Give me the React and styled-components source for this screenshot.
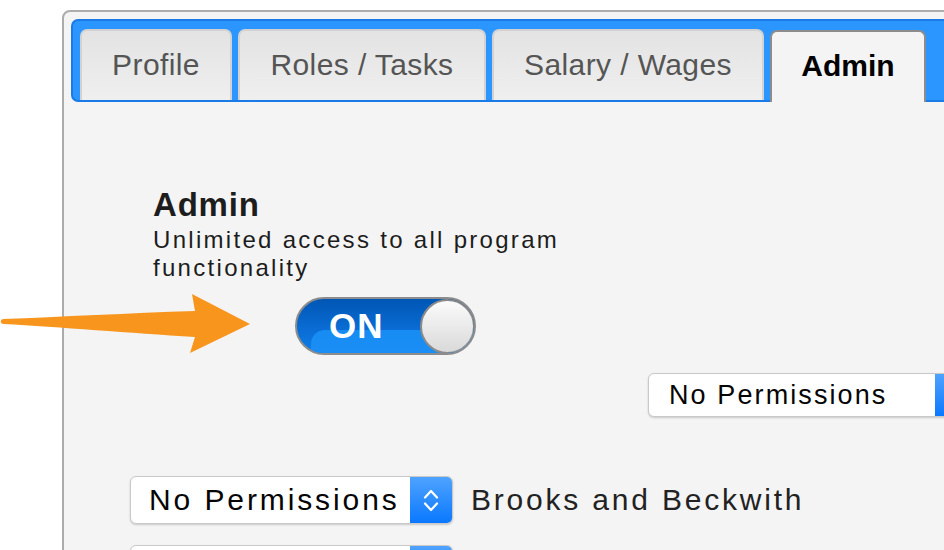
import React from 'react'
import styled, { createGlobalStyle } from 'styled-components'

const GlobalStyle = createGlobalStyle`
  html, body {
    margin: 0;
    padding: 0;
    background: #ffffff;
  }
  body {
    font-family: "Liberation Sans", Arial, Helvetica, sans-serif;
  }
`

const Page = styled.div`
  position: relative;
  width: 944px;
  height: 550px;
  overflow: hidden;
  padding: 10px 0 0 62px;
  box-sizing: border-box;
`

const Panel = styled.div`
  width: 920px;
  height: 600px;
  box-sizing: border-box;
  border: 2px solid #acacac;
  border-radius: 8px 0 0 0;
  background: #f4f4f4;
  padding: 7px 0 0 7px;
`

const TabBar = styled.div`
  display: flex;
  align-items: flex-end;
  gap: 6px;
  height: 83px;
  box-sizing: border-box;
  padding: 9px 0 0 7px;
  background: #2b96ff;
  border: 2px solid #1a7ae6;
  border-right: none;
  border-radius: 7px 0 0 7px;
`

const Tab = styled.div`
  flex: none;
  width: ${({ width }) => width}px;
  height: ${({ active }) => (active ? 72 : 71)}px;
  margin-bottom: ${({ active }) => (active ? -2 : 0)}px;
  box-sizing: border-box;
  display: flex;
  align-items: center;
  justify-content: center;
  padding-bottom: 2px;
  border: 2px solid ${({ active }) => (active ? '#8c8c8c' : '#d2d2d2')};
  border-bottom: none;
  border-radius: 7px 7px 0 0;
  background: ${({ active }) => (active ? '#f4f4f4' : 'linear-gradient(#e3e3e3, #efefef)')};
  color: ${({ active }) => (active ? '#000' : '#555')};
  font-size: 30px;
  font-weight: ${({ active }) => (active ? 700 : 400)};
  letter-spacing: ${({ active }) => (active ? 0 : 0.4)}px;
`

const Content = styled.div`
  padding: 84px 0 0 82px;
`

const Heading = styled.div`
  font-size: 33px;
  line-height: 38px;
  font-weight: 700;
  color: #1d1d1d;
  letter-spacing: 0.8px;
`

const Description = styled.div`
  width: 450px;
  margin-top: 2px;
  font-size: 24px;
  line-height: 28px;
  color: #1d1d1d;
  letter-spacing: 2.3px;
`

const Toggle = styled.div`
  position: relative;
  width: 181px;
  height: 58px;
  margin: 15px 0 0 142px;
  box-sizing: border-box;
  border: 2px solid #8c8c8c;
  border-radius: 29px;
  overflow: hidden;
  display: flex;
  align-items: center;
  justify-content: space-between;
  padding-left: 32px;
  background: linear-gradient(#0056b4, #0a6cd4 55%, #0f7de8);

  &::after {
    content: '';
    position: absolute;
    left: 14px;
    right: 0;
    top: 31px;
    bottom: 0;
    border-radius: 14px 0 0 0;
    background: linear-gradient(#168cf2, #1b8ef5);
  }
`

const ToggleLabel = styled.span`
  position: relative;
  z-index: 1;
  color: #ffffff;
  font-size: 35px;
  font-weight: 700;
  letter-spacing: 1px;
`

const Knob = styled.span`
  position: relative;
  z-index: 1;
  width: 55px;
  height: 55px;
  margin-right: -1px;
  box-sizing: border-box;
  border-radius: 50%;
  border: 2px solid #8a8a8a;
  background: linear-gradient(#fbfbfb, #d9d9d9);
`

const SelectRow = styled.div`
  display: flex;
  align-items: center;
  gap: 18px;
  margin: ${({ top }) => top}px 0 0 ${({ left }) => left}px;
`

const Select = styled.div`
  flex: none;
  display: flex;
  width: ${({ width }) => width}px;
  height: ${({ height }) => height}px;
  box-sizing: border-box;
  border: 1px solid #c9c9c9;
  border-radius: 6px;
  background: #ffffff;
  box-shadow: 0 1px 2px rgba(0, 0, 0, 0.18);
  overflow: hidden;
`

const SelectText = styled.span`
  flex: 1;
  display: flex;
  align-items: center;
  padding-left: ${({ pad }) => pad}px;
  color: #050505;
  font-size: ${({ size }) => size}px;
  letter-spacing: ${({ spacing }) => spacing}px;
  white-space: nowrap;
  overflow: hidden;
`

const SelectArrows = styled.span`
  flex: none;
  width: 42px;
  display: flex;
  flex-direction: column;
  align-items: center;
  justify-content: center;
  gap: 3px;
  background: linear-gradient(#4fa3ff, #0a78ff);
`

const RowLabel = styled.span`
  color: #222;
  font-size: 30px;
  letter-spacing: 2.8px;
  white-space: nowrap;
`

const Chevron = ({ up }) => (
  <svg width="16" height="10" viewBox="0 0 16 10">
    <path
      d={up ? 'M2 8.5 L8 2 L14 8.5' : 'M2 1.5 L8 8 L14 1.5'}
      fill="none"
      stroke="#ffffff"
      strokeWidth="2.2"
      strokeLinecap="round"
      strokeLinejoin="round"
    />
  </svg>
)

const Arrow = styled.svg`
  position: absolute;
  left: 0;
  top: 290px;
`

function PermissionSelect({ width, height, size, pad, spacing }) {
  return (
    <Select width={width} height={height}>
      <SelectText size={size} pad={pad} spacing={spacing}>No Permissions</SelectText>
      <SelectArrows>
        <Chevron up />
        <Chevron />
      </SelectArrows>
    </Select>
  )
}

const tabs = [
  { label: 'Profile', width: 152 },
  { label: 'Roles / Tasks', width: 248 },
  { label: 'Salary / Wages', width: 272 },
  { label: 'Admin', width: 156, active: true },
]

export default function App() {
  return (
    <>
      <GlobalStyle />
      <Page>
        <Panel>
          <TabBar>
            {tabs.map((t) => (
              <Tab key={t.label} width={t.width} active={t.active}>
                {t.label}
              </Tab>
            ))}
          </TabBar>
          <Content>
            <Heading>Admin</Heading>
            <Description>Unlimited access to all program functionality</Description>
            <Toggle>
              <ToggleLabel>ON</ToggleLabel>
              <Knob />
            </Toggle>
            <SelectRow top={18} left={495}>
              <PermissionSelect width={330} height={44} size={27} pad={20} spacing={2.1} />
            </SelectRow>
            <SelectRow top={59} left={-23}>
              <PermissionSelect width={323} height={48} size={30} pad={18} spacing={2.9} />
              <RowLabel>Brooks and Beckwith</RowLabel>
            </SelectRow>
            <SelectRow top={21} left={-23}>
              <PermissionSelect width={323} height={48} size={30} pad={18} spacing={2.9} />
            </SelectRow>
          </Content>
        </Panel>
        <Arrow width="260" height="70" viewBox="0 0 260 70">
          <path
            d="M3 29 C60 27 130 23 195 21 L192 4 L250 34 L190 63 L195 47 C130 43 60 37 3 34 C0 33 0 30 3 29 Z"
            fill="#f7951d"
          />
        </Arrow>
      </Page>
    </>
  )
}
